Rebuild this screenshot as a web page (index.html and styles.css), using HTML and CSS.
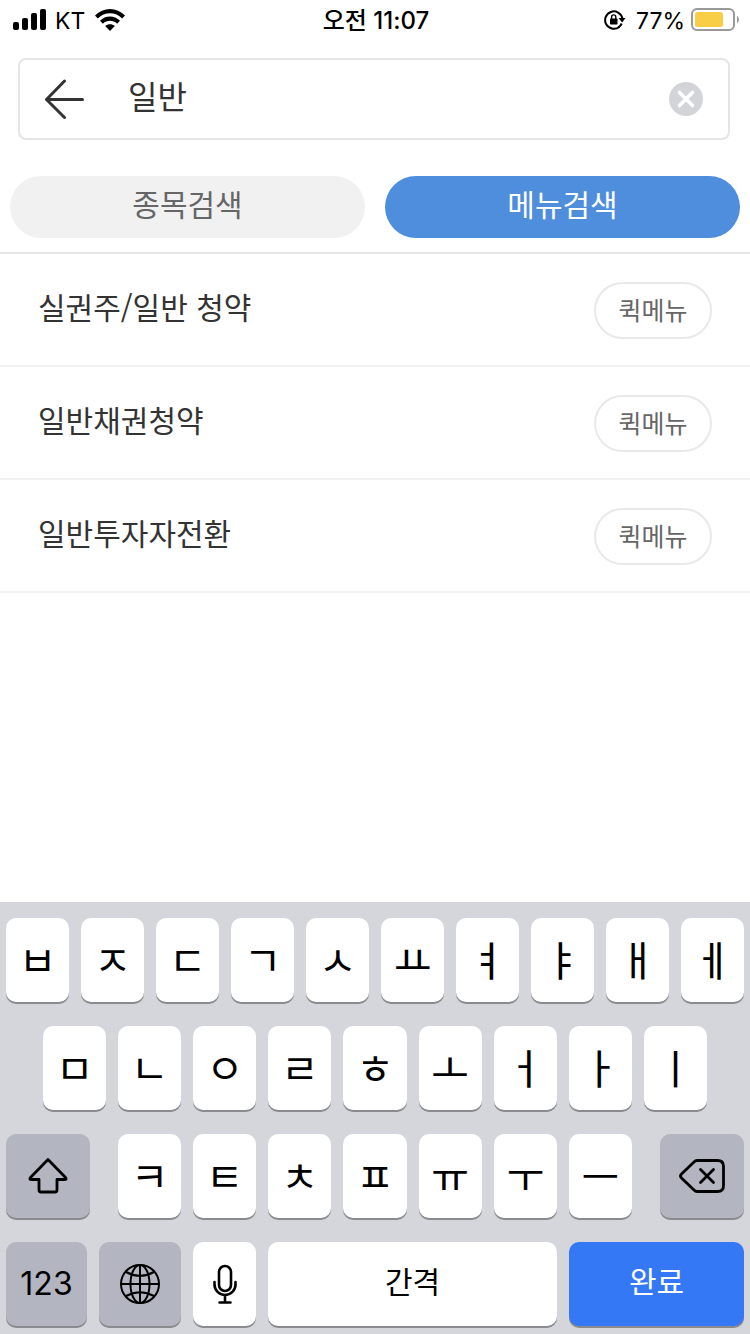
FILE: index.html
```
<!DOCTYPE html>
<html lang="ko">
<head>
<meta charset="utf-8">
<meta name="viewport" content="width=device-width, initial-scale=1">
<title>메뉴검색</title>
<link rel="stylesheet" href="styles.css">
</head>
<body>
<header class="status">
  <div class="status-side">
    <svg class="signal" width="34" height="22" viewBox="0 0 34 22" aria-hidden="true"><rect x="0" y="13" width="6" height="8" rx="2"/><rect x="9" y="9" width="6" height="12" rx="2"/><rect x="18" y="4" width="6" height="17" rx="2"/><rect x="27" y="0" width="6" height="21" rx="2"/></svg>
    <span class="carrier">KT</span>
    <svg class="wifi" width="30" height="22" viewBox="0 0 30 22" aria-hidden="true"><path d="M0 6.6C8.2-2.2 21.8-2.2 30 6.6L27.2 9.5C20.6 2.6 9.4 2.6 2.8 9.500Z"/><path d="M5 11.800C10.600 6.100 19.400 6.100 25 11.800L22.100 14.700C18.200 10.900 11.800 10.900 7.900 14.700Z"/><path d="M10.200 17C12.800 14.600 17.200 14.600 19.800 17L15 22Z"/></svg>
  </div>
  <time class="clock">오전 11:07</time>
  <div class="status-side status-right">
    <svg class="lock" width="22" height="22" viewBox="0 0 22 22" aria-hidden="true"><path d="M15.500 17.700A8.700 8.700 0 1 1 18.400 9.500" fill="none" stroke="#000" stroke-width="2"/><path d="M14.500 18.400A8.700 8.700 0 0 0 17.700 14.500" fill="none" stroke="#000" stroke-width="2"/><path d="M14.500 9H21.500L18.200 13.500Z"/><rect x="6" y="9.500" width="7.500" height="6" rx=".8"/><path d="M7.600 10V8a2.100 2.100 0 0 1 4.200 0v2" fill="none" stroke="#000" stroke-width="1.400"/></svg>
    <span class="percent">77%</span>
    <svg class="battery" width="48" height="24" viewBox="0 0 48 24" aria-hidden="true"><rect x="1" y="1" width="42" height="21" rx="5" fill="none" stroke="#999" stroke-width="2"/><rect x="4" y="4" width="28" height="15" rx="2.500" fill="#f7ce46"/><path d="M46 8c2.600 1 2.600 6 0 7Z" fill="#999"/></svg>
  </div>
</header>

<main class="content">
  <form class="search" role="search">
    <button class="icon-button" type="button" aria-label="뒤로"><svg width="40" height="40" viewBox="0 0 40 40"><path d="M19.500 2L1.500 20.500L19.500 38.500M1.500 20.500H37.500" fill="none" stroke="#333" stroke-width="3" stroke-linecap="round" stroke-linejoin="round"/></svg></button>
    <input class="search-input" type="text" value="일반" aria-label="검색어">
    <button class="icon-button" type="reset" aria-label="지우기"><svg width="34" height="34" viewBox="0 0 34 34"><circle cx="17" cy="17" r="17" fill="#d3d4d8"/><path d="M10.500 10.500l13 13M23.500 10.500l-13 13" stroke="#fff" stroke-width="3.600" stroke-linecap="round"/></svg></button>
  </form>

  <nav class="tabs">
    <button class="tab" type="button">종목검색</button>
    <button class="tab tab-active" type="button">메뉴검색</button>
  </nav>

  <ul class="results">
    <li class="result"><span class="result-name">실권주/일반 청약</span><button class="quick" type="button">퀵메뉴</button></li>
    <li class="result"><span class="result-name">일반채권청약</span><button class="quick" type="button">퀵메뉴</button></li>
    <li class="result"><span class="result-name">일반투자자전환</span><button class="quick" type="button">퀵메뉴</button></li>
  </ul>
</main>

<section class="keyboard" aria-label="키보드">
  <div class="keys">
    <button class="key" type="button">ㅂ</button><button class="key" type="button">ㅈ</button><button class="key" type="button">ㄷ</button><button class="key" type="button">ㄱ</button><button class="key" type="button">ㅅ</button><button class="key" type="button">ㅛ</button><button class="key" type="button">ㅕ</button><button class="key" type="button">ㅑ</button><button class="key" type="button">ㅐ</button><button class="key" type="button">ㅔ</button>
  </div>
  <div class="keys keys-inset">
    <button class="key" type="button">ㅁ</button><button class="key" type="button">ㄴ</button><button class="key" type="button">ㅇ</button><button class="key" type="button">ㄹ</button><button class="key" type="button">ㅎ</button><button class="key" type="button">ㅗ</button><button class="key" type="button">ㅓ</button><button class="key" type="button">ㅏ</button><button class="key" type="button">ㅣ</button>
  </div>
  <div class="keys keys-wide-gap">
    <button class="key key-gray key-side" type="button" aria-label="시프트"><svg width="40" height="36" viewBox="0 0 40 36"><path d="M20 1.500L37.500 19.500Q39 21.500 36.500 21.500H29V32Q29 34 27 34H13Q11 34 11 32V21.500H3.500Q1 21.500 2.500 19.500Z" fill="none" stroke="#000" stroke-width="2.800" stroke-linejoin="round"/></svg></button>
    <div class="keys keys-middle">
      <button class="key" type="button">ㅋ</button><button class="key" type="button">ㅌ</button><button class="key" type="button">ㅊ</button><button class="key" type="button">ㅍ</button><button class="key" type="button">ㅠ</button><button class="key" type="button">ㅜ</button><button class="key" type="button">ㅡ</button>
    </div>
    <button class="key key-gray key-side" type="button" aria-label="삭제"><svg width="46" height="34" viewBox="0 0 46 34"><path d="M18 1.500H38.500Q44.500 1.500 44.500 7.500V26.500Q44.500 32.500 38.500 32.500H18Q16.500 32.500 15 31L2.500 19Q.5 17 2.500 15L15 3Q16.500 1.500 18 1.500Z" fill="none" stroke="#000" stroke-width="2.800"/><path d="M21.500 10.500l13 13M34.500 10.500l-13 13" stroke="#000" stroke-width="2.800" stroke-linecap="round"/></svg></button>
  </div>
  <div class="keys">
    <button class="key key-gray key-word key-number" type="button">123</button>
    <button class="key key-gray key-globe" type="button" aria-label="언어 변경"><svg width="40" height="40" viewBox="0 0 40 40" fill="none" stroke="#000" stroke-width="2"><circle cx="20" cy="20" r="19"/><ellipse cx="20" cy="20" rx="9.500" ry="19"/><path d="M20 1V39M1 20H39M6 8Q20 15.500 34 8M6 32Q20 24.500 34 32"/></svg></button>
    <button class="key key-mic" type="button" aria-label="음성 입력"><svg width="24" height="40" viewBox="0 0 24 40" fill="none" stroke="#000" stroke-width="2.600" stroke-linecap="round"><rect x="6" y="2" width="12" height="25" rx="6"/><path d="M1.500 18V20.500A10.500 10.500 0 0 0 22.500 20.500V18M12 31V38M6.500 38.500H17.500"/></svg></button>
    <button class="key key-word key-space" type="button">간격</button>
    <button class="key key-word key-done" type="button">완료</button>
  </div>
</section>
</body>
</html>
```
FILE: styles.css
```
* {
  box-sizing: border-box;
}

body {
  margin: 0;
  min-height: 100vh;
  display: flex;
  flex-direction: column;
  background: #fff;
  color: #333;
  font-family: "Noto Sans CJK KR", sans-serif;
}

button,
input {
  margin: 0;
  padding: 0;
  border: 0;
  background: none;
  color: inherit;
  font: inherit;
}

svg {
  display: block;
}

.status {
  display: flex;
  align-items: center;
  height: 40px;
  padding: 0 11px 0 13px;
  color: #000;
  font-family: Inter, "Noto Sans CJK KR", sans-serif;
  font-size: 23px;
  line-height: 36px;
}

.status-side {
  flex: 1;
  display: flex;
  align-items: center;
}

.status-right {
  justify-content: flex-end;
}

.carrier {
  margin: 0 10px 0 8px;
  padding-top: 2px;
}

.clock {
  padding-top: 2px;
  font-size: 24px;
  font-weight: 500;
}

.percent {
  margin: 0 6px 0 10px;
  padding-top: 2px;
}

.content {
  flex: 1;
}

.search {
  display: flex;
  align-items: center;
  height: 82px;
  margin: 18px 20px 0 18px;
  padding: 0 25px;
  border: 2px solid #e5e5e5;
  border-radius: 8px;
}

.search-input {
  flex: 1;
  min-width: 0;
  margin-left: 43px;
  padding-bottom: 8px;
  font-size: 32px;
  line-height: 48px;
  outline: 0;
}

.tabs {
  display: flex;
  gap: 20px;
  padding: 36px 10px 14px;
  border-bottom: 2px solid #e5e5e5;
}

.tab {
  flex: 1;
  height: 62px;
  padding-bottom: 8px;
  border-radius: 31px;
  background: #f1f1f1;
  color: #666;
  font-size: 30px;
  line-height: 44px;
}

.tab-active {
  background: #4e8edc;
  color: #fff;
}

.results {
  margin: 0;
  padding: 0;
  list-style: none;
}

.result {
  display: flex;
  align-items: center;
  justify-content: space-between;
  height: 113px;
  padding: 2px 38px 0;
  border-bottom: 2px solid #f1f1f1;
}

.result-name {
  padding-bottom: 10px;
  font-size: 30px;
  line-height: 44px;
}

.quick {
  width: 118px;
  height: 57px;
  padding-bottom: 4px;
  border: 2px solid #e9e9e9;
  border-radius: 29px;
  color: #666;
  font-size: 25px;
  line-height: 36px;
}

.keyboard {
  display: flex;
  flex-direction: column;
  gap: 24px;
  padding: 16px 6px 8px;
  background: #d5d6dc;
  color: #000;
}

.keys {
  display: flex;
  gap: 12px;
}

.keys-inset {
  padding: 0 37px;
}

.keys-wide-gap {
  gap: 28px;
}

.keys-middle {
  flex: 514 1 0;
}

.key {
  flex: 63 1 0;
  display: flex;
  align-items: center;
  justify-content: center;
  min-width: 0;
  height: 84px;
  padding-bottom: 4px;
  border-radius: 10px;
  background: #fff;
  box-shadow: 0 2px 0 #8a8b8f;
  font-size: 41px;
  line-height: 60px;
}

.key-gray {
  background: #b3b6c0;
}

.key-side {
  flex-grow: 84;
  padding-bottom: 0;
}

.key-word {
  padding-bottom: 8px;
  font-size: 30px;
  line-height: 44px;
}

.key-number {
  flex-grow: 81;
  padding-bottom: 0;
  font-family: Inter, sans-serif;
  font-size: 32px;
}

.key-globe {
  flex-grow: 82;
  padding-bottom: 0;
}

.key-mic {
  padding-bottom: 0;
}

.key-space {
  flex-grow: 289;
}

.key-done {
  flex-grow: 175;
  background: #3478f6;
  color: #fff;
}
```
